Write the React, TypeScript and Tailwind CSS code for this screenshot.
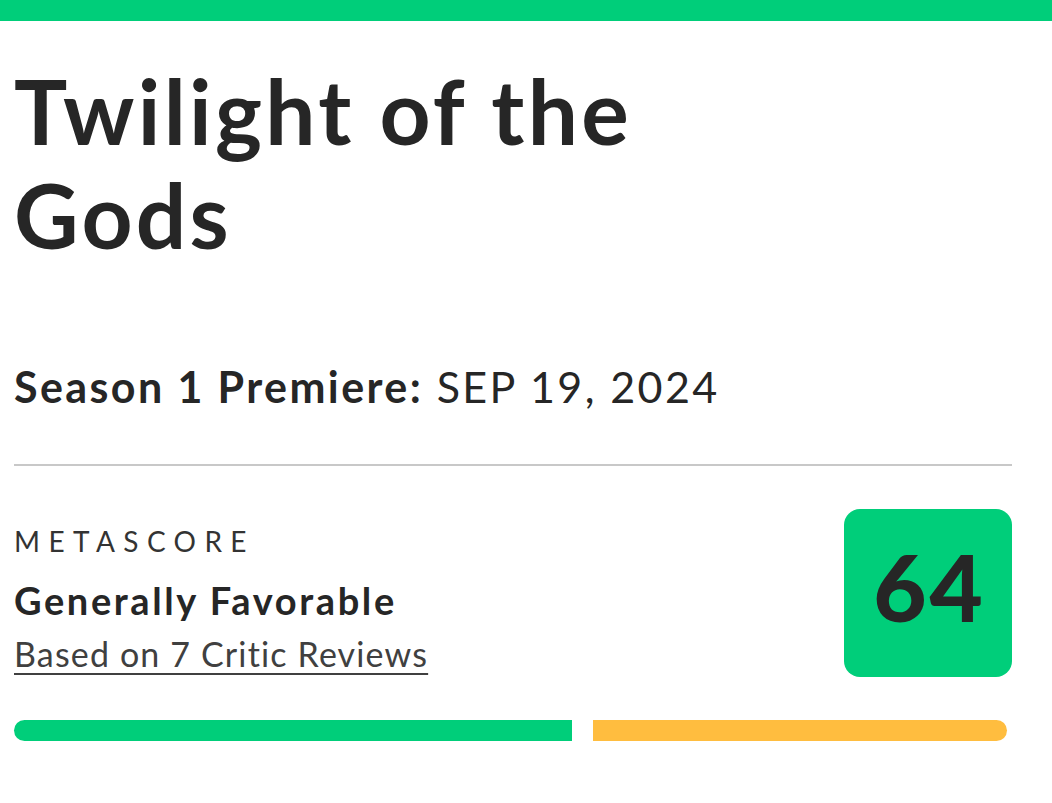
import React from "react";

export default function App() {
  return (
    <div className="w-[1052px] h-[803px] bg-white overflow-hidden text-[#262626]" style={{ fontFamily: 'Lato, "Open Sans", sans-serif' }}>
      <div className="h-[21px] bg-[#00ce7a]" />
      <div className="pl-[14px] pr-[40px]">
        <h1 className="mt-[38px] text-[89px] leading-[104px] font-bold tracking-[3.3px]">
          Twilight of the
          <br />
          Gods
        </h1>
        <div className="mt-[94px] text-[43px] leading-[52px] tracking-[2.4px]">
          <span className="font-bold">Season 1 Premiere:</span> <span>SEP 19, 2024</span>
        </div>
        <div className="mt-[51px] h-[2px] bg-[#c8c8c8]" />
        <div className="mt-[43px] flex items-start justify-between">
          <div className="flex flex-col pt-[15px]">
            <div className="text-[28px] leading-[34px] tracking-[0.3em] text-[#333]">METASCORE</div>
            <div className="mt-[19px] text-[38px] leading-[46px] font-bold tracking-[2.6px]">Generally Favorable</div>
            <div className="mt-[11px] text-[34px] leading-[40px] tracking-[1.15px] text-[#404040] underline underline-offset-[6px] decoration-2">
              Based on 7 Critic Reviews
            </div>
          </div>
          <div className="w-[168px] h-[168px] rounded-[16px] bg-[#00ce7a] flex items-center justify-center pb-[12px]">
            <span className="text-[92px] font-black leading-none tracking-[3px] pl-[3px]">64</span>
          </div>
        </div>
        <div className="mt-[43px] flex items-center">
          <div className="w-[558px] h-[21px] bg-[#00ce7a] rounded-l-full" />
          <div className="ml-[21px] w-[414px] h-[21px] bg-[#ffbd3f] rounded-r-full" />
        </div>
      </div>
    </div>
  );
}
